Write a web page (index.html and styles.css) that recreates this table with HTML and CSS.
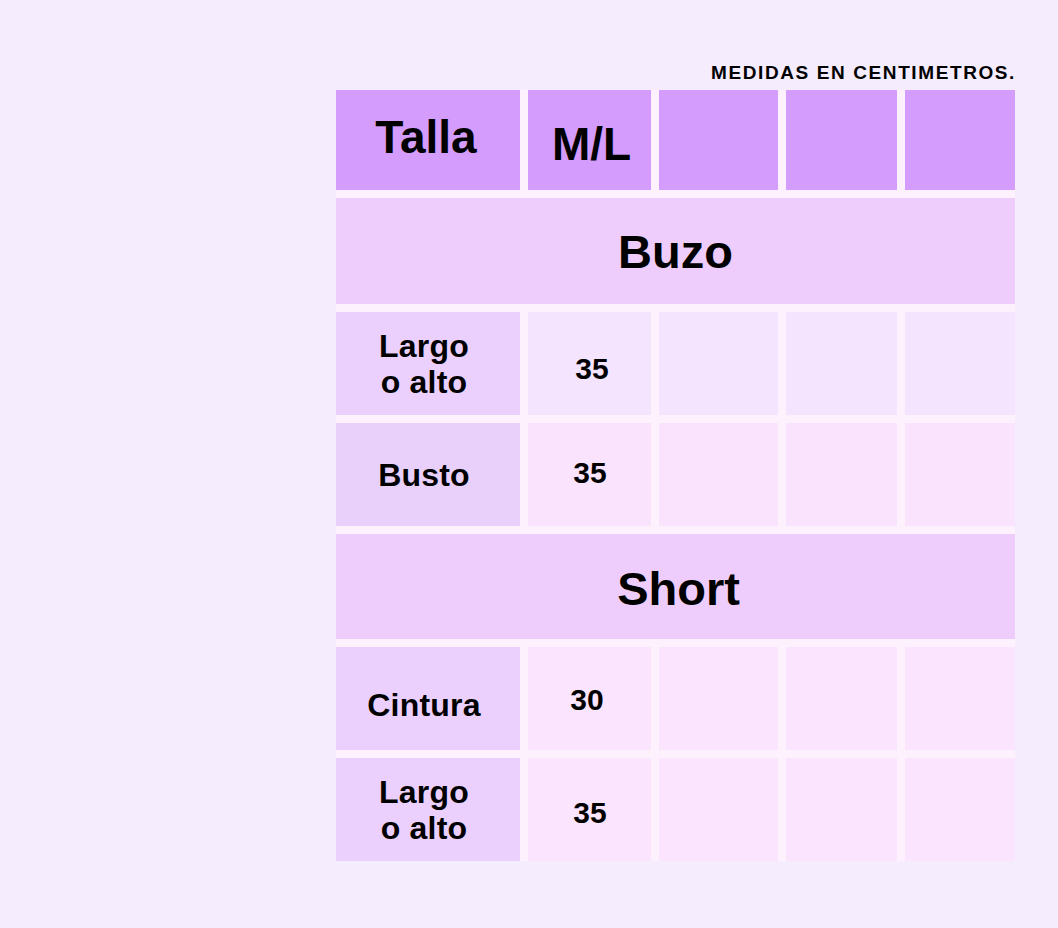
FILE: index.html
```html
<!DOCTYPE html>
<html lang="es">
<head>
<meta charset="utf-8">
<title>Medidas</title>
<link rel="stylesheet" href="styles.css">
</head>
<body>
<div class="page">
  <div class="caption">MEDIDAS EN CENTIMETROS.</div>
  <div class="chart">
    <div class="cell head talla">Talla</div>
    <div class="cell head ml">M/L</div>
    <div class="cell head"></div>
    <div class="cell head"></div>
    <div class="cell head"></div>

    <div class="band band-buzo">Buzo</div>

    <div class="cell label r1">Largo<br>o alto</div>
    <div class="cell val r1">35</div>
    <div class="cell blank r1"></div>
    <div class="cell blank r1"></div>
    <div class="cell blank r1"></div>

    <div class="cell label r2">Busto</div>
    <div class="cell val r2">35</div>
    <div class="cell blank r2"></div>
    <div class="cell blank r2"></div>
    <div class="cell blank r2"></div>

    <div class="band band-short">Short</div>

    <div class="cell label r3">Cintura</div>
    <div class="cell val r3">30</div>
    <div class="cell blank r3"></div>
    <div class="cell blank r3"></div>
    <div class="cell blank r3"></div>

    <div class="cell label r4">Largo<br>o alto</div>
    <div class="cell val r4">35</div>
    <div class="cell blank r4"></div>
    <div class="cell blank r4"></div>
    <div class="cell blank r4"></div>
  </div>
</div>
</body>
</html>
```
FILE: styles.css
```css
html, body {
  margin: 0;
  padding: 0;
}
body {
  background: #f5ecfd;
  font-family: "Liberation Sans", Arial, sans-serif;
  color: #000;
  min-height: 928px;
}
.page {
  padding-top: 62px;
  padding-left: 336px;
  width: 679px;
}
.caption {
  text-align: right;
  font-weight: bold;
  font-size: 19px;
  line-height: 22px;
  height: 22px;
  letter-spacing: 1.6px;
  margin-right: -1px;
  margin-bottom: 6px;
}
.chart {
  display: grid;
  grid-template-columns: 184px 123px 119px 111px 110px;
  grid-template-rows: 100px 106px 103px 103px 105px 103px 103px;
  gap: 8px;
  background: #fdf1fd;
}
.cell {
  display: flex;
  align-items: center;
  justify-content: center;
  text-align: center;
  font-weight: bold;
}
.head {
  background: #d39cfd;
}
.talla {
  font-size: 46px;
  padding-bottom: 6px;
  padding-right: 4px;
}
.ml {
  font-size: 46px;
  padding-top: 8px;
  padding-left: 4px;
}
.band {
  grid-column: 1 / -1;
  background: #eecdfd;
  display: flex;
  align-items: center;
  justify-content: center;
  font-weight: bold;
  font-size: 47px;
}
.band-short {
  padding-left: 6px;
  padding-top: 4px;
}
.label {
  font-size: 32px;
  line-height: 36px;
  letter-spacing: 0.2px;
  background: #ebd0fd;
  padding-right: 8px;
}
.label.r2 {
  background: #e9d0fb;
}
.label.r3 {
  padding-top: 12px;
}
.val {
  font-size: 30px;
}
.val.r1 { padding-top: 11px; padding-left: 5px; }
.val.r2 { padding-bottom: 3px; padding-left: 1px; }
.val.r3 { padding-top: 3px; padding-right: 5px; }
.val.r4 { padding-top: 7px; padding-left: 1px; }
.r1.val, .r1.blank { background: #f4e4fd; }
.r2.val, .r2.blank { background: #fae3fd; }
.r3.val, .r3.blank { background: #fbe4fd; }
.r4.val, .r4.blank { background: #fbe4fd; }
```
